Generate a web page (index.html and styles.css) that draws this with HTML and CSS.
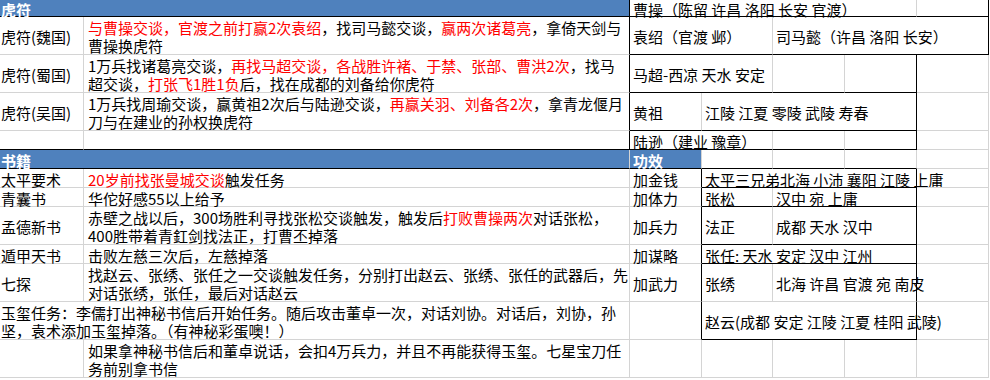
FILE: index.html
```html
<!DOCTYPE html>
<html lang="zh-CN">
<head>
<meta charset="utf-8">
<title>三国群英传 物品</title>
<link rel="stylesheet" href="styles.css">
</head>
<body>
<div class="sheet">
  <!-- row 1 -->
  <div class="c hd s2 kb kr">虎符</div>
  <div class="c top p s4 kb">曹操（陈留 许昌 洛阳 长安 官渡）</div>
  <div class="c top kb kr"></div>

  <!-- row 2 -->
  <div class="c a">虎符(魏国)</div>
  <div class="c b kr"><div><span class="red">与曹操交谈，官渡之前打赢2次袁绍</span>，找司马懿交谈，<span class="red">赢两次诸葛亮</span>，拿倚天剑与<br>曹操换虎符</div></div>
  <div class="c p s2 kb">袁绍（官渡 邺）</div>
  <div class="c p s3 kb kr">司马懿（许昌 洛阳 长安）</div>

  <!-- row 3 -->
  <div class="c a">虎符(蜀国)</div>
  <div class="c b kr"><div>1万兵找诸葛亮交谈，<span class="red">再找马超交谈，各战胜许褚、于禁、张部、曹洪2次</span>，找马<br>超交谈，<span class="red">打张飞1胜1负</span>后，找在成都的刘备给你虎符</div></div>
  <div class="c p s2 kb">马超-西凉 天水 安定</div>
  <div class="c kb"></div>
  <div class="c kb kr"></div>
  <div class="c"></div>

  <!-- row 4 -->
  <div class="c a">虎符(吴国)</div>
  <div class="c b kr"><div>1万兵找周瑜交谈，赢黄祖2次后与陆逊交谈，<span class="red">再赢关羽、刘备各2次</span>，拿青龙偃月<br>刀与在建业的孙权换虎符</div></div>
  <div class="c p kb">黄祖</div>
  <div class="c p s3 kb kr">江陵 江夏 零陵 武陵 寿春</div>
  <div class="c"></div>

  <!-- row 5 -->
  <div class="c a kb"></div>
  <div class="c b kb kr"></div>
  <div class="c p s2 kb">陆逊（建业 豫章）</div>
  <div class="c kb"></div>
  <div class="c kb kr"></div>
  <div class="c"></div>

  <!-- row 6 -->
  <div class="c hd s2 kb">书籍</div>
  <div class="c hd p kb">功效</div>
  <div class="c kb"></div>
  <div class="c kb"></div>
  <div class="c kb"></div>
  <div class="c"></div>

  <!-- row 7 -->
  <div class="c a">太平要术</div>
  <div class="c b"><div><span class="red">20岁前找张曼城交谈</span>触发任务</div></div>
  <div class="c p kr">加金钱</div>
  <div class="c p s3 kb kr">太平三兄弟北海 小沛 襄阳 江陵 上庸</div>
  <div class="c"></div>

  <!-- row 8 -->
  <div class="c a">青囊书</div>
  <div class="c b">华佗好感55以上给予</div>
  <div class="c p kr">加体力</div>
  <div class="c p kb">张松</div>
  <div class="c p s2 kb kr">汉中 宛 上庸</div>
  <div class="c"></div>

  <!-- row 9 -->
  <div class="c a">孟德新书</div>
  <div class="c b"><div>赤壁之战以后，300场胜利寻找张松交谈触发，触发后<span class="red">打败曹操两次</span>对话张松，<br>400胜带着青釭剑找法正，打曹丕掉落</div></div>
  <div class="c p kr">加兵力</div>
  <div class="c p kb">法正</div>
  <div class="c p s2 kb kr">成都 天水 汉中</div>
  <div class="c"></div>

  <!-- row 10 -->
  <div class="c a">遁甲天书</div>
  <div class="c b">击败左慈三次后，左慈掉落</div>
  <div class="c p kr">加谋略</div>
  <div class="c p s3 kb kr">张任: 天水 安定 汉中 江州</div>
  <div class="c"></div>

  <!-- row 11 -->
  <div class="c a">七探</div>
  <div class="c b"><div>找赵云、张绣、张任之一交谈触发任务，分别打出赵云、张绣、张任的武器后，先<br>对话张绣，张任，最后对话赵云</div></div>
  <div class="c p kr">加武力</div>
  <div class="c p">张绣</div>
  <div class="c p s2 kr">北海 许昌 官渡 宛 南皮</div>
  <div class="c"></div>

  <!-- row 12 -->
  <div class="c a s2"><div>玉玺任务：李儒打出神秘书信后开始任务。随后攻击董卓一次，对话刘协。对话后，刘协，孙<br>坚，袁术添加玉玺掉落。（有神秘彩蛋噢！）</div></div>
  <div class="c kr"></div>
  <div class="c p s3 kb kr">赵云(成都 安定 江陵 江夏 桂阳 武陵)</div>
  <div class="c"></div>

  <!-- row 13 -->
  <div class="c a"></div>
  <div class="c b"><div>如果拿神秘书信后和董卓说话，会扣4万兵力，并且不再能获得玉玺。七星宝刀任<br>务前别拿书信</div></div>
  <div class="c"></div>
  <div class="c"></div>
  <div class="c"></div>
  <div class="c"></div>
  <div class="c"></div>
</div>
</body>
</html>
```

FILE: styles.css
```css
* {
  box-sizing: border-box;
  margin: 0;
  padding: 0;
}

body {
  background: #ffffff;
  font-family: "Noto Sans CJK SC", "Noto Sans", sans-serif;
  font-size: 15px;
  color: #000000;
}

.sheet {
  display: grid;
  grid-template-columns: 84px 546px 72px 71px 72px 72px 72px;
  grid-template-rows: 17px 38px 38px 38px 19px 19px 19px 19px 38px 19px 38px 38px 38px;
  width: 990px;
}

.c {
  display: flex;
  align-items: center;
  min-width: 0;
  padding-top: 3px;
  border-right: 1px solid #d4d4d4;
  border-bottom: 1px solid #d4d4d4;
  line-height: 18px;
  white-space: nowrap;
  overflow: visible;
}

.a { padding-left: 1px; }
.b { padding-left: 4px; }
.p { padding-left: 3px; }

.s2 { grid-column: span 2; }
.s3 { grid-column: span 3; }
.s4 { grid-column: span 4; }

.top {
  padding-top: 2px;
  line-height: 17px;
}

.hd {
  background: #4f81bd;
  color: #ffffff;
  font-weight: bold;
  padding-top: 2px;
  padding-left: 1px;
  line-height: 17px;
}

.hd.p { padding-left: 3px; }

.kb { border-bottom-color: #000000; }
.kr { border-right-color: #000000; }

.red { color: #ff0000; }
```
